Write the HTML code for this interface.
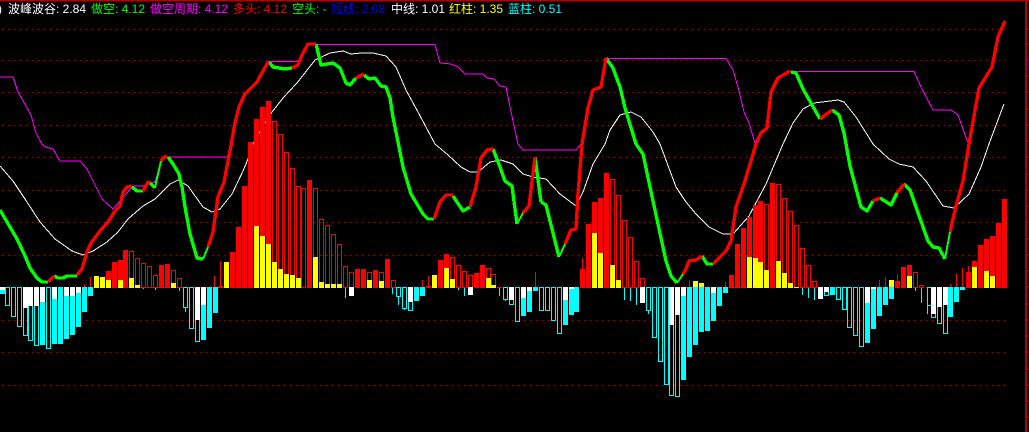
<!DOCTYPE html>
<html>
<head>
<meta charset="utf-8">
<style>
html,body{margin:0;padding:0;background:#000;width:1029px;height:432px;overflow:hidden}
svg{display:block;position:absolute;left:0;top:0}
text{font-family:"Liberation Sans","WenQuanYi Zen Hei","Noto Sans CJK SC",sans-serif;font-size:12px}
</style>
</head>
<body>
<svg width="1029" height="432" viewBox="0 0 1029 432" xmlns="http://www.w3.org/2000/svg">
<rect width="1029" height="432" fill="#000"/>
<rect x="0" y="0" width="1029" height="1.5" fill="#b00000"/>
<rect x="1025" y="0" width="2" height="432" fill="#b00000"/>
<rect x="1027" y="56" width="2" height="15" fill="#000080"/>
<path d="M1027 29h2M1027 44h2M1027 60h2M1027 76h2M1027 92h2M1027 109h2M1027 125h2M1027 141h2M1027 157h2M1027 174h2M1027 190h2M1027 206h2M1027 222h2M1027 239h2M1027 255h2M1027 271h2M1027 287h2M1027 304h2M1027 320h2M1027 336h2M1027 352h2M1027 369h2M1027 385h2M1027 401h2M1027 417h2" stroke="#b00000" stroke-width="1" shape-rendering="crispEdges"/>
<path d="M2 29.5H1006M2 60.5H1006M2 92.5H1006M2 125.5H1006M2 157.5H1006M2 190.5H1006M2 222.5H1006M2 255.5H1006M2 287.5H1006M2 320.5H1006M2 352.5H1006M2 385.5H1006" stroke="#b00000" stroke-width="1" stroke-dasharray="1 5" fill="none" shape-rendering="crispEdges"/>

<g shape-rendering="crispEdges">
<path fill="none" stroke="#fff" stroke-width="1" d="M0 166L13 181L25 199L40 222L55 239L72 251L83 255L93 251L107 242L118 232L128 219L143 206L155 199L170 184L178 180L188 186L203 207L212 212L220 209L232 194L243 171L248 159L253 144L265 123L272 112L283 98L297 83L315 60L330 53L343 51L351 54L361 53L373 53L386 56L396 67L406 90L418 112L435 144L448 155L461 167L470 172L478 172L490 162L501 160L513 164L523 174L533 177L546 179L560 194L576 206L583 192L593 164L605 144L610 130L620 115L631 112L641 117L653 132L660 144L676 187L686 202L696 214L709 227L723 234L733 234L749 216L766 184L783 144L793 123L803 109L814 103L838 100L844 102L856 117L873 144L889 159L899 164L913 167L926 181L943 206L954 208L969 194L981 167L989 144L1004 104"/>
<path fill="none" stroke="#ff00ff" stroke-width="1" d="M0 77L13 77L18 92L31 115L36 133L42 144L45 147L53 149L60 161L80 161L87 169L102 199L113 209L133 186L143 186L155 182L161 161L167 157L227 157L233 144M268 61.5L300 61.5M315 44.5L435 44.5L440 63L451 64L458 67L465 74L483 74L487 78L494 79L500 86L506 87L510 107L518 144L523 150L576 150L581 144M606 58.5L726 58.5L733 70L738 87L744 112L749 123L755 143M790 71.5L914 71.5L921 87L933 110L951 110L958 115L968 143"/>
<path fill="#ff0000" d="M106 271h5V288h-5zM112 262h5V288h-5zM118 260h5V288h-5zM123 250h5V288h-5zM159 265h5V288h-5zM165 264h5V288h-5zM218 286h5V288h-5zM230 252h5V288h-5zM236 227h5V288h-5zM242 186h5V288h-5zM248 142h5V288h-5zM254 119h5V288h-5zM260 107h5V288h-5zM266 101h5V288h-5zM307 180h5V288h-5zM355 269h5V288h-5zM361 269h5V288h-5zM373 270h5V288h-5zM385 259h5V288h-5zM426 286h5V288h-5zM438 260h5V288h-5zM444 254h5V288h-5zM474 273h5V288h-5zM480 265h5V288h-5zM497 287h5V288h-5zM580 269h5V288h-5zM586 224h5V288h-5zM592 202h5V288h-5zM598 198h5V288h-5zM604 173h5V288h-5zM729 275h5V288h-5zM735 244h5V288h-5zM741 228h5V288h-5zM747 217h5V288h-5zM753 205h5V288h-5zM758 201h5V288h-5zM770 183h5V288h-5zM895 281h5V288h-5zM901 267h5V288h-5zM907 265h5V288h-5zM966 272h5V288h-5zM972 261h5V288h-5zM978 245h5V288h-5zM984 239h5V288h-5zM990 236h5V288h-5zM996 223h5V288h-5zM1002 199h5V288h-5z"/>
<path fill="none" stroke="#ff0000" stroke-width="1" d="M129.5 251.5h4V287.5h-4zM135.5 258.5h4V287.5h-4zM141.5 263.5h4V287.5h-4zM147.5 266.5h4V287.5h-4zM153.5 275.5h4V287.5h-4zM171.5 270.5h4V287.5h-4zM177.5 278.5h4V287.5h-4zM272.5 121.5h4V287.5h-4zM278.5 134.5h4V287.5h-4zM284.5 152.5h4V287.5h-4zM290.5 168.5h4V287.5h-4zM296.5 186.5h4V287.5h-4zM301.5 188.5h4V287.5h-4zM313.5 188.5h4V287.5h-4zM319.5 219.5h4V287.5h-4zM325.5 225.5h4V287.5h-4zM331.5 234.5h4V287.5h-4zM337.5 244.5h4V287.5h-4zM343.5 266.5h4V287.5h-4zM349.5 272.5h4V287.5h-4zM367.5 272.5h4V287.5h-4zM379.5 272.5h4V287.5h-4zM391.5 280.5h4V287.5h-4zM450.5 257.5h4V287.5h-4zM456.5 265.5h4V287.5h-4zM462.5 271.5h4V287.5h-4zM468.5 275.5h4V287.5h-4zM486.5 268.5h4V287.5h-4zM491.5 274.5h4V287.5h-4zM610.5 179.5h4V287.5h-4zM616.5 195.5h4V287.5h-4zM622.5 220.5h4V287.5h-4zM628.5 237.5h4V287.5h-4zM634.5 261.5h4V287.5h-4zM640.5 278.5h4V287.5h-4zM764.5 204.5h4V287.5h-4zM776.5 184.5h4V287.5h-4zM782.5 198.5h4V287.5h-4zM788.5 211.5h4V287.5h-4zM794.5 225.5h4V287.5h-4zM800.5 248.5h4V287.5h-4zM806.5 265.5h4V287.5h-4zM812.5 281.5h4V287.5h-4zM913.5 272.5h4V287.5h-4zM919.5 285.5h4V287.5h-4z"/>
<path fill="none" stroke="#ff0000" stroke-width="1" d="M84.5 284V288M90.5 277V288M214.5 276V288M220.5 261V288M422.5 280V288M428.5 276V288M535.5 272V288M582.5 258V288M689.5 280V288M725.5 282V288M879.5 280V288M885.5 277V288M897.5 274V288M950.5 284V288M956.5 274V288M962.5 268V288M968.5 266V288"/>
<path fill="#ffff00" d="M94 276h5V288h-5zM100 277h5V288h-5zM106 280h5V288h-5zM118 280h5V288h-5zM129 278h5V288h-5zM135 285h5V288h-5zM171 283h5V288h-5zM224 262h5V288h-5zM254 226h5V288h-5zM260 236h5V288h-5zM266 244h5V288h-5zM272 262h5V288h-5zM278 269h5V288h-5zM284 274h5V288h-5zM290 275h5V288h-5zM296 278h5V288h-5zM313 257h5V288h-5zM319 282h5V288h-5zM325 284h5V288h-5zM331 284h5V288h-5zM337 284h5V288h-5zM367 280h5V288h-5zM379 281h5V288h-5zM432 275h5V288h-5zM444 268h5V288h-5zM450 279h5V288h-5zM486 278h5V288h-5zM491 285h5V288h-5zM592 233h5V288h-5zM598 253h5V288h-5zM610 265h5V288h-5zM616 280h5V288h-5zM693 281h5V288h-5zM699 283h5V288h-5zM747 257h5V288h-5zM753 258h5V288h-5zM758 262h5V288h-5zM764 270h5V288h-5zM776 261h5V288h-5zM782 273h5V288h-5zM788 283h5V288h-5zM794 287h5V288h-5zM889 280h5V288h-5zM907 276h5V288h-5zM972 267h5V288h-5zM984 271h5V288h-5zM990 276h5V288h-5z"/>

<path fill="#00ffff" d="M0 287h5V294h-5zM40 287h5V345h-5zM52 287h5V344h-5zM58 287h5V344h-5zM64 287h5V339h-5zM70 287h5V335h-5zM76 287h5V327h-5zM82 287h5V312h-5zM88 287h5V296h-5zM201 287h5V340h-5zM207 287h5V328h-5zM213 287h5V313h-5zM414 287h5V301h-5zM420 287h5V296h-5zM521 287h5V316h-5zM527 287h5V312h-5zM533 287h5V291h-5zM563 287h5V325h-5zM569 287h5V315h-5zM574 287h5V312h-5zM681 287h5V380h-5zM687 287h5V357h-5zM693 287h5V345h-5zM699 287h5V332h-5zM705 287h5V331h-5zM711 287h5V321h-5zM717 287h5V306h-5zM723 287h5V293h-5zM830 287h5V295h-5zM865 287h5V343h-5zM871 287h5V329h-5zM877 287h5V316h-5zM883 287h5V305h-5zM889 287h5V299h-5zM948 287h5V317h-5zM954 287h5V302h-5zM960 287h5V290h-5z"/>
<path fill="none" stroke="#00ffff" stroke-width="1" d="M5.5 287.5h4V305.5h-4zM11.5 287.5h4V316.5h-4zM17.5 287.5h4V326.5h-4zM23.5 287.5h4V335.5h-4zM28.5 287.5h4V340.5h-4zM34.5 287.5h4V345.5h-4zM46.5 287.5h4V348.5h-4zM183.5 287.5h4V307.5h-4zM189.5 287.5h4V328.5h-4zM195.5 287.5h4V341.5h-4zM396.5 287.5h4V296.5h-4zM402.5 287.5h4V308.5h-4zM408.5 287.5h4V310.5h-4zM503.5 287.5h4V299.5h-4zM509.5 287.5h4V304.5h-4zM515.5 287.5h4V321.5h-4zM539.5 287.5h4V310.5h-4zM545.5 287.5h4V310.5h-4zM551.5 287.5h4V320.5h-4zM557.5 287.5h4V333.5h-4zM646.5 287.5h4V310.5h-4zM652.5 287.5h4V337.5h-4zM658.5 287.5h4V361.5h-4zM664.5 287.5h4V384.5h-4zM669.5 287.5h4V395.5h-4zM675.5 287.5h4V396.5h-4zM824.5 287.5h4V295.5h-4zM836.5 287.5h4V299.5h-4zM842.5 287.5h4V309.5h-4zM847.5 287.5h4V327.5h-4zM853.5 287.5h4V335.5h-4zM859.5 287.5h4V346.5h-4zM927.5 287.5h4V305.5h-4zM931.5 287.5h4V317.5h-4zM937.5 287.5h4V323.5h-4zM943.5 287.5h4V333.5h-4z"/>
<path fill="none" stroke="#00ffff" stroke-width="1" d="M143.5 288V289M155.5 288V290M179.5 288V291M185.5 307V312M345.5 288V298M392.5 288V294M398.5 297V305M404.5 309V310M458.5 288V290M464.5 288V296M499.5 288V296M505.5 300V301M624.5 288V300M630.5 288V301M636.5 288V305M648.5 311V314M802.5 288V295M808.5 288V298M814.5 288V300M915.5 288V291M921.5 288V303M927.5 306V314"/>
<path fill="#ffffff" d="M0 287h5V290h-5zM23 287h5V308h-5zM28 287h5V306h-5zM34 287h5V306h-5zM40 287h5V302h-5zM52 287h5V299h-5zM64 287h5V296h-5zM70 287h5V296h-5zM76 287h5V293h-5zM195 287h5V320h-5zM201 287h5V305h-5zM349 287h5V296h-5zM408 287h5V302h-5zM468 287h5V295h-5zM509 287h5V300h-5zM521 287h5V298h-5zM527 287h5V291h-5zM563 287h5V300h-5zM569 287h5V289h-5zM640 287h5V303h-5zM669 287h5V325h-5zM675 287h5V315h-5zM681 287h5V296h-5zM711 287h5V293h-5zM818 287h5V299h-5zM824 287h5V292h-5zM865 287h5V303h-5zM871 287h5V289h-5zM931 287h5V314h-5zM937 287h5V307h-5zM943 287h5V305h-5z"/>

<g fill="none" stroke-linejoin="round" stroke-linecap="butt">
<path stroke="#00ff00" stroke-width="3.4" d="M0 210L17 239L25 256L30 268L37 278L42 282L48 282M54 276L58 278L63 278L67 276L77 276M132 187L137 191L143 191M150 183L155 188M168 157L173 164L179 174L182 187L185 207L190 234L197 258L203 259M269 62L273 67L285 69L292 68M316 44L321 65L333 63L340 68L346 83L350 85L356 78M364 75L369 79L375 78L381 86L386 87L390 98L393 117L403 167L411 194L423 214L428 219L434 219M453 196L463 211L470 207M493 149L500 167L505 181L512 186L517 224M541 202L546 205L559 257M541 202L535 157M606 58L613 68L620 87L625 108L636 144L643 154L653 201L666 261L671 276L677 283M702 256L707 264L713 264M791 72L796 73L803 89L820 119M832 110L839 115L844 133L850 166L861 207L867 211L873 201M880 198L891 205L897 193M904 184L910 190L928 241L933 247L939 248L945 259"/>
<path stroke="#00ff00" stroke-width="2" d="M155 188L157 179L161 161M203 259L208 247M517 224L523 213M559 257L565 244M677 283L683 274M945 259L950 232"/>
<path stroke="#ff0000" stroke-width="3.4" d="M48 282L54 276M77 275L82 269L87 252L91 243L100 231L108 222L115 211L120 206L123 192L127 187L132 186M143 191L148 182L150 183M161 161L163 158L167 156M208 247L213 232L218 197L224 182L230 151L235 123L239 107L245 94L257 82L268 62M292 68L298 65L302 55L308 44L316 44M356 78L364 74M434 219L440 202L446 195L453 195M470 207L476 187L481 158L487 150L493 149M523 213L529 206L535 157M565 244L571 230L576 229L578 194L582 144L588 108L593 90L601 87L606 58M683 274L686 269L689 261L696 260L702 256M713 264L726 251L731 241L736 207L744 184L751 161L756 144L761 133L767 128L771 92L778 78L790 71M820 119L832 110M873 201L880 198M897 193L904 184M950 232L956 206L963 181L969 144L979 88L992 67L998 37L1005 21"/>
</g>
</g>

<text x="-2" y="13" fill="#fff">)</text>
<text x="8" y="13" fill="#fff">波峰波谷: 2.84</text>
<text x="91" y="13" fill="#00ff00">做空: 4.12</text>
<text x="150" y="13" fill="#ff00ff">做空周期: 4.12</text>
<text x="233" y="13" fill="#ff0000">多头: 4.12</text>
<text x="292" y="13" fill="#00ff00">空头: -</text>
<text x="331" y="13" fill="#0000ff">短线: 2.08</text>
<text x="391" y="13" fill="#fff">中线: 1.01</text>
<text x="449" y="13" fill="#ffff00">红柱: 1.35</text>
<text x="508" y="13" fill="#00ffff">蓝柱: 0.51</text>
</svg>
</body>
</html>
